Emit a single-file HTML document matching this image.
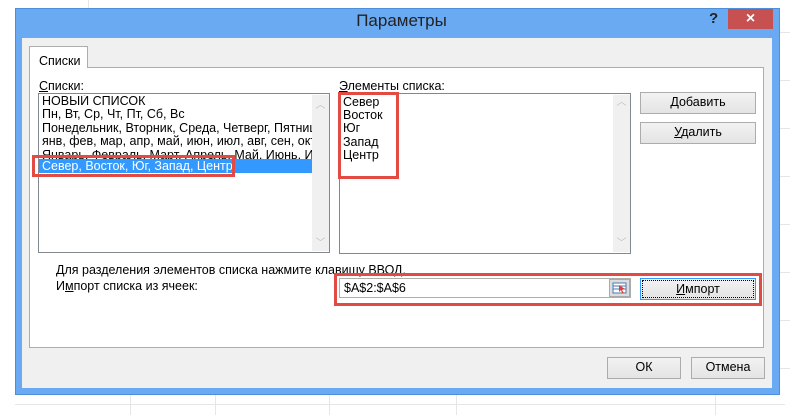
<!DOCTYPE html>
<html><head><meta charset="utf-8"><style>
*{margin:0;padding:0;box-sizing:border-box}
body{width:803px;height:415px;background:#fff;position:relative;overflow:hidden;font-family:"Liberation Sans",sans-serif;font-size:12.5px;color:#000}
.a{position:absolute}
.grid{background:#e6e6e6}
.btn{position:absolute;background:linear-gradient(#f2f2f2,#e4e4e4);border:1px solid #acacac;text-align:center;line-height:19px;font-size:12.5px}
.red{position:absolute;border:3px solid #e24a43}
.li{height:13.3px;line-height:13px;white-space:nowrap;overflow:hidden;padding-left:3px}
</style></head><body>
<div class="a grid" style="left:88px;top:0;width:1px;height:8px"></div>
<div class="a grid" style="left:130px;top:395px;width:1px;height:20px"></div>
<div class="a grid" style="left:215px;top:395px;width:1px;height:20px"></div>
<div class="a grid" style="left:329px;top:395px;width:1px;height:20px"></div>
<div class="a grid" style="left:456px;top:395px;width:1px;height:20px"></div>
<div class="a grid" style="left:715px;top:395px;width:1px;height:20px"></div>
<div class="a grid" style="left:15px;top:404px;width:770px;height:1px"></div>
<div class="a grid" style="left:780px;top:32px;width:10px;height:1px"></div>
<div class="a grid" style="left:780px;top:80px;width:10px;height:1px"></div>
<div class="a grid" style="left:780px;top:128px;width:10px;height:1px"></div>
<div class="a grid" style="left:780px;top:176px;width:10px;height:1px"></div>
<div class="a grid" style="left:780px;top:224px;width:10px;height:1px"></div>
<div class="a grid" style="left:780px;top:272px;width:10px;height:1px"></div>
<div class="a grid" style="left:780px;top:320px;width:10px;height:1px"></div>
<div class="a grid" style="left:780px;top:368px;width:10px;height:1px"></div>
<div class="a" style="left:15px;top:8px;width:765px;height:387px;background:#6aaaf2;border:1px solid #4e8fdc"></div>
<div class="a" style="left:22px;top:38px;width:750px;height:350px;background:#f0f0f0"></div>
<div class="a" style="left:0;top:11px;width:803px;text-align:center;font-size:17px;color:#222">Параметры</div>
<div class="a" style="left:709px;top:10px;font-size:15px;font-weight:bold;color:#222">?</div>
<div class="a" style="left:728px;top:9px;width:45px;height:20px;background:#c75050;color:#fff;text-align:center;line-height:19px;font-size:16px;font-weight:bold">×</div>
<div class="a" style="left:29px;top:67px;width:735px;height:281px;background:#fff;border:1px solid #adadad"></div>
<div class="a" style="left:29px;top:46px;width:59px;height:22px;background:#fff;border:1px solid #adadad;border-bottom:none;padding:8px 0 0 9px;line-height:12px">Списки</div>
<div class="a" style="left:39px;top:79px"><u>С</u>писки:</div>
<div class="a" style="left:339px;top:79px"><u>Э</u>лементы списка:</div>
<div class="a" style="left:38px;top:93px;width:292px;height:160px;border:1px solid #828790;background:#fff;padding-top:1px">
<div class="li">НОВЫЙ СПИСОК</div>
<div class="li">Пн, Вт, Ср, Чт, Пт, Сб, Вс</div>
<div class="li" style="width:273px">Понедельник, Вторник, Среда, Четверг, Пятница, Суббота</div>
<div class="li" style="width:273px">янв, фев, мар, апр, май, июн, июл, авг, сен, окт, ноя</div>
<div class="li" style="width:273px;height:11px;line-height:15px">Январь, Февраль, Март, Апрель, Май, Июнь, Июль</div>
<div class="li" style="width:273px;background:#3399ff;color:#fff;height:14px;line-height:14px">Север, Восток, Юг, Запад, Центр</div>
<div class="a" style="left:273px;top:1px;width:17px;height:156px;background:#f0f0f0;color:#c0c0c0;text-align:center;font-size:10px">
<div style="margin-top:1px">︿</div><div style="position:absolute;bottom:2px;width:17px">﹀</div></div>
</div>
<div class="a" style="left:339px;top:93px;width:292px;height:161px;border:1px solid #828790;background:#fff;padding:2px 0 0 3px;line-height:13.2px">Север<br>Восток<br>Юг<br>Запад<br>Центр
<div class="a" style="left:273px;top:1px;width:17px;height:157px;background:#f0f0f0;color:#c0c0c0;text-align:center;font-size:10px"><div style="margin-top:1px">︿</div><div style="position:absolute;bottom:2px;width:17px">﹀</div></div>
</div>
<div class="btn" style="left:640px;top:92px;width:116px;height:22px"><u>Д</u>обавить</div>
<div class="btn" style="left:640px;top:122px;width:116px;height:22px"><u>У</u>далить</div>
<div class="a" style="left:56px;top:263px">Для разделения элементов списка нажмите клавишу ВВОД.</div>
<div class="a" style="left:56px;top:279px">И<u>м</u>порт списка из ячеек:</div>
<div class="a" style="left:339px;top:278px;width:292px;height:20px;border:1px solid #adadad;background:#fff;padding:2px 0 0 4px">$A$2:$A$6</div>
<div class="a" style="left:609px;top:279px;width:21px;height:18px;background:#ddd;border:1px solid #aaa">
<svg width="19" height="16"><rect x="3" y="3" width="13" height="10" fill="#fff" stroke="#4a7ab8"/><line x1="3" y1="6" x2="16" y2="6" stroke="#4a7ab8"/><line x1="3" y1="9" x2="16" y2="9" stroke="#4a7ab8"/><path d="M9 5l6 4-3 1 2 3-2 0-1-3-2 2z" fill="#e0403a"/></svg></div>
<div class="btn" style="left:640px;top:278px;width:116px;height:22px;border-color:#3399ff;padding:1px"><div style="border:1px dotted #000;height:18px;line-height:17px"><u>И</u>мпорт</div></div>
<div class="red" style="left:32px;top:155px;width:203px;height:22px"></div>
<div class="red" style="left:338px;top:92px;width:61px;height:87px"></div>
<div class="red" style="left:334px;top:273px;width:428px;height:33px"></div>
<div class="btn" style="left:607px;top:357px;width:74px;height:22px">ОК</div>
<div class="btn" style="left:691px;top:357px;width:74px;height:22px">Отмена</div>
</body></html>
